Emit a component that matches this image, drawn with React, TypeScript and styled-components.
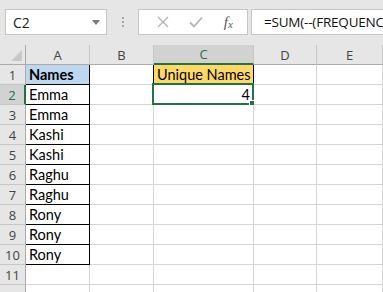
import styled, { createGlobalStyle } from "styled-components";

const GlobalStyle = createGlobalStyle`
  body {
    margin: 0;
    background: #ffffff;
    overflow: hidden;
    font-family: "Open Sans", "Liberation Sans", sans-serif;
  }
`;

const columns = ["A", "B", "C", "D", "E"];

const names = ["Emma", "Emma", "Kashi", "Kashi", "Raghu", "Raghu", "Rony", "Rony", "Rony"];

export default function App() {
  const rows = Array.from({ length: 12 }, (_, i) => i + 1);

  return (
    <Page>
      <GlobalStyle />
      <TopBar>
        <NameBox>
          <span>C2</span>
          <DropArrow viewBox="0 0 8 5">
            <path d="M0 0 L8 0 L4 5 Z" fill="#7a7a7a" />
          </DropArrow>
        </NameBox>
        <Grip>
          <i />
          <i />
          <i />
        </Grip>
        <FormulaButtons>
          <svg width="12" height="12" viewBox="0 0 12 12">
            <path d="M1 1 L11 11 M11 1 L1 11" stroke="#b4b4b4" strokeWidth="1.4" />
          </svg>
          <svg width="14" height="12" viewBox="0 0 14 12">
            <path d="M1 6.5 L5 10.5 L13 1.5" stroke="#b4b4b4" strokeWidth="1.8" fill="none" />
          </svg>
          <Fx>
            f<sub>x</sub>
          </Fx>
        </FormulaButtons>
        <FormulaInput>=SUM(--(FREQUENC</FormulaInput>
      </TopBar>

      <Sheet>
        <Corner>
          <svg width="11" height="11" viewBox="0 0 11 11">
            <path d="M11 0 L11 11 L0 11 Z" fill="#c8c8c8" />
          </svg>
        </Corner>
        {columns.map((c) => (
          <ColHeader key={c} $active={c === "C"}>
            {c}
          </ColHeader>
        ))}

        {rows.map((r) => (
          <Row key={r} r={r} />
        ))}
      </Sheet>
    </Page>
  );
}

const Row = ({ r }: { r: number }) => {
  const inTable = r <= 10;
  const nameText = r === 1 ? "Names" : r <= 10 ? names[r - 2] : "";

  return (
    <>
      {/* row 12 is only a sliver at the bottom edge, its number is not shown */}
      <RowHeader $active={r === 2}>{r <= 11 ? r : ""}</RowHeader>
      <Cell
        $fill={r === 1 ? "#bdd7ee" : undefined}
        $right={inTable ? "#000" : undefined}
        $bottom={inTable ? "#000" : undefined}
        $bold={r === 1}
      >
        {nameText}
      </Cell>
      <Cell $right={r === 1 ? "#000" : undefined} />
      {r === 1 ? (
        <Cell $fill="#ffd966" $right="#000" $center>
          Unique Names
        </Cell>
      ) : r === 2 ? (
        <Cell $alignRight>
          4
          <Selection>
            <Handle />
          </Selection>
        </Cell>
      ) : (
        <Cell />
      )}
      <Cell />
      <Cell />
    </>
  );
};

const Page = styled.div`
  width: 383px;
  height: 292px;
  overflow: hidden;
`;

const TopBar = styled.div`
  height: 45px;
  background: #e6e6e6;
  display: flex;
  align-items: flex-start;
  padding: 9px 0 0 5px;
  box-sizing: border-box;
`;

const NameBox = styled.div`
  width: 102px;
  height: 26px;
  box-sizing: border-box;
  background: #fff;
  border: 1px solid #c6c6c6;
  display: flex;
  align-items: center;
  justify-content: space-between;
  padding: 0 6px 0 7px;
  font-size: 14px;
  color: #222;
`;

const DropArrow = styled.svg`
  width: 8px;
  height: 5px;
`;

const Grip = styled.div`
  width: 31px;
  height: 26px;
  display: flex;
  flex-direction: column;
  align-items: center;
  justify-content: center;
  gap: 2px;

  i {
    width: 2px;
    height: 2px;
    background: #a8a8a8;
  }
`;

const FormulaButtons = styled.div`
  width: 110px;
  height: 26px;
  box-sizing: border-box;
  background: #fff;
  border: 1px solid #c6c6c6;
  display: flex;
  align-items: center;
  justify-content: space-around;
  padding: 0 4px 0 8px;
`;

const Fx = styled.span`
  font-family: "Liberation Serif", serif;
  font-style: italic;
  font-size: 15px;
  color: #5a5a5a;
  line-height: 1;

  sub {
    font-size: 11px;
    vertical-align: -1px;
  }
`;

const FormulaInput = styled.div`
  flex: 1;
  height: 26px;
  margin-left: 3px;
  box-sizing: border-box;
  background: #fff;
  border: 1px solid #c6c6c6;
  border-right: none;
  padding-left: 12px;
  font-size: 13.5px;
  letter-spacing: -0.2px;
  line-height: 24px;
  color: #111;
  white-space: nowrap;
  overflow: hidden;
`;

const Sheet = styled.div`
  display: grid;
  grid-template-columns: 26px 64px 64px 100px 63px 1fr;
  grid-auto-rows: 20px;
`;

const HeaderBase = styled.div`
  box-sizing: border-box;
  background: #e6e6e6;
  color: #444;
  font-size: 13px;
  display: flex;
  align-items: center;
  justify-content: center;
`;

const Corner = styled(HeaderBase)`
  border-right: 1px solid #ababab;
  border-bottom: 1px solid #ababab;
  align-items: flex-end;
  justify-content: flex-end;
  padding: 0 3px 3px 0;
`;

const ColHeader = styled(HeaderBase)<{ $active?: boolean }>`
  background: ${(p) => (p.$active ? "#d2d2d2" : "#e6e6e6")};
  color: ${(p) => (p.$active ? "#217346" : "#444")};
  border-right: 1px solid #c6c6c6;
  border-bottom: ${(p) => (p.$active ? "2px solid #217346" : "1px solid #ababab")};
`;

const RowHeader = styled(HeaderBase)<{ $active?: boolean }>`
  background: ${(p) => (p.$active ? "#d2d2d2" : "#e6e6e6")};
  color: ${(p) => (p.$active ? "#217346" : "#444")};
  border-right: ${(p) => (p.$active ? "2px solid #217346" : "1px solid #ababab")};
  border-bottom: 1px solid #c6c6c6;
  padding-top: 1px;
`;

const Cell = styled.div<{
  $fill?: string;
  $right?: string;
  $bottom?: string;
  $bold?: boolean;
  $center?: boolean;
  $alignRight?: boolean;
}>`
  position: relative;
  box-sizing: border-box;
  background: ${(p) => p.$fill ?? "#fff"};
  border-right: 1px solid ${(p) => p.$right ?? "#d4d4d4"};
  border-bottom: 1px solid ${(p) => p.$bottom ?? "#d4d4d4"};
  font-family: "Lato", "Open Sans", sans-serif;
  font-size: 14.5px;
  font-weight: ${(p) => (p.$bold ? 700 : 400)};
  color: #000;
  line-height: 19px;
  padding: 0 3px;
  white-space: nowrap;
  text-align: ${(p) => (p.$center ? "center" : p.$alignRight ? "right" : "left")};
`;

const Selection = styled.div`
  position: absolute;
  top: -2px;
  left: -2px;
  right: -1px;
  bottom: -1px;
  border: 2px solid #217346;
  pointer-events: none;
`;

const Handle = styled.div`
  position: absolute;
  right: -4px;
  bottom: -4px;
  width: 5px;
  height: 5px;
  background: #217346;
  border: 1px solid #fff;
`;
